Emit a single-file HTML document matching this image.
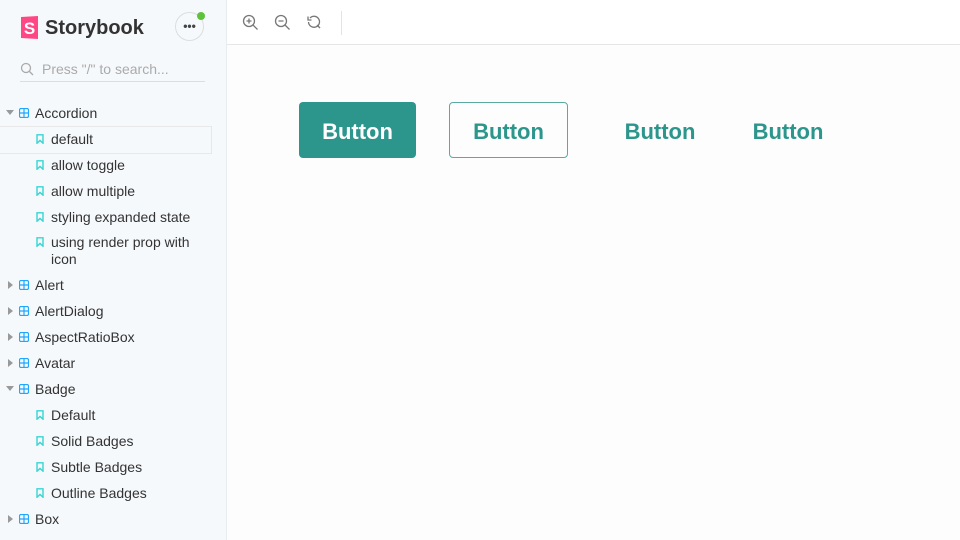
<!DOCTYPE html>
<html style="overflow:hidden;height:540px"><head><style>
body{margin:0;width:960px;height:540px;overflow:hidden;font-family:"Liberation Sans",sans-serif;background:#fdfdfd;position:relative}
.sb{position:absolute;left:0;top:0;width:226px;height:540px;background:#f6f9fc;border-right:1px solid #e8ebef}
.row{position:absolute;font-size:14px;color:#333;line-height:17px;white-space:nowrap}
.comp{left:35px}
.story{left:51px}
.ic{position:absolute;left:-16px;top:3px;width:10px;height:10px}
.arr{position:absolute;left:-29px;top:5px;width:0;height:0}
.down{border-left:4px solid transparent;border-right:4px solid transparent;border-top:5px solid #999}
.right{border-top:4px solid transparent;border-bottom:4px solid transparent;border-left:5px solid #999;left:-27px;top:4px}
.btn{position:absolute;top:102px;height:56px;padding-top:3px;font-weight:bold;font-size:22px;display:flex;align-items:center;justify-content:center;color:#2c958c;box-sizing:border-box;border-radius:4px}
#rows{position:absolute;left:0;top:0;width:226px;height:540px;overflow:hidden}
</style></head><body>
<div class="sb">
 <svg style="position:absolute;left:20px;top:16px" width="19" height="23" viewBox="0 0 19 23"><path d="M1 1 L18 0 L18 23 L1 22Z" fill="#ff4785"/><text x="9.5" y="18" font-size="17" font-weight="bold" fill="#fff" text-anchor="middle" font-family="Liberation Sans">S</text></svg>
 <div style="position:absolute;left:45px;top:17px;font-size:20px;font-weight:bold;color:#333">Storybook</div>
 <div style="position:absolute;left:175px;top:12px;width:29px;height:29px;border-radius:50%;border:1px solid #ddd;box-sizing:border-box;text-align:center;line-height:26px;font-size:12px;color:#444;font-weight:bold">•••</div>
 <div style="position:absolute;left:197px;top:12px;width:8px;height:8px;border-radius:50%;background:#5dc43a"></div>
 <svg style="position:absolute;left:20px;top:62px" width="14" height="14" viewBox="0 0 14 14"><circle cx="6" cy="6" r="4.5" stroke="#aaa" stroke-width="1.3" fill="none"/><path d="M9.5 9.5L13 13" stroke="#aaa" stroke-width="1.3"/></svg>
 <div style="position:absolute;left:42px;top:61px;font-size:14px;color:#aaa">Press "/" to search...</div>
 <div style="position:absolute;left:20px;top:81px;width:185px;height:1px;background:#ddd"></div>
 <div style="position:absolute;left:0;top:126px;width:211px;height:26px;border-top:1px solid #e8e8e8;border-bottom:1px solid #e8e8e8;border-right:1px solid #e8e8e8"></div>
</div>
<div id="rows"></div>
<div style="position:absolute;left:227px;top:0;right:0;height:44px;border-bottom:1px solid #e6e6e6;background:#fff"></div>
<svg style="position:absolute;left:242px;top:14px" width="90" height="18" viewBox="0 0 90 18" fill="none" stroke="#777" stroke-width="1.3"><circle cx="7" cy="7" r="5.5"/><path d="M11 11l4.5 4.5M4.5 7h5M7 4.5v5"/><circle cx="39" cy="7" r="5.5"/><path d="M43 11l4.5 4.5M36.5 7h5"/><path d="M68 4a5.5 5.5 0 1 1 -1.5 4M66 2.5v3.5h3.5"/><path d="M75 11l3 3"/></svg>
<div style="position:absolute;left:341px;top:11px;width:1px;height:24px;background:#e3e3e3"></div>
<div class="btn" style="left:299px;width:117px;background:#2c958c;color:#fff">Button</div>
<div class="btn" style="left:449px;width:119px;border:1.5px solid #5aa9a2">Button</div>
<div class="btn" style="left:610px;width:100px">Button</div>
<div class="btn" style="left:738px;width:100px">Button</div>
<script>
var g='<svg class="ic" viewBox="0 0 10 10"><rect x="0.5" y="0.5" width="9" height="9" rx="1.5" fill="none" stroke="#1ea7fd" stroke-width="1.2"/><path d="M5 0.5v9M0.5 5h9" stroke="#1ea7fd" stroke-width="1.2"/></svg>';
var b='<svg class="ic" viewBox="0 0 10 10"><path d="M2 0.8h6v8.4L5 6.5 2 9.2Z" fill="none" stroke="#37d5d3" stroke-width="1.4"/></svg>';
var R=[['c','Accordion',113,'d'],['s','default',139],['s','allow toggle',165],['s','allow multiple',191],['s','styling expanded state',217],['s','using render prop with<br>icon',242],['c','Alert',285,'r'],['c','AlertDialog',311,'r'],['c','AspectRatioBox',337,'r'],['c','Avatar',363,'r'],['c','Badge',389,'d'],['s','Default',415],['s','Solid Badges',441],['s','Subtle Badges',467],['s','Outline Badges',493],['c','Box',519,'r'],['c','Breadcrumb',545,'r']];
var h='';R.forEach(function(r){h+='<div class="row '+(r[0]=='c'?'comp':'story')+'" style="top:'+(r[2]-8)+'px">'+(r[0]=='c'?'<span class="arr '+(r[3]=='d'?'down':'right')+'"></span>'+g:b)+r[1]+'</div>'});
document.getElementById('rows').innerHTML=h;
</script>
</body></html>
